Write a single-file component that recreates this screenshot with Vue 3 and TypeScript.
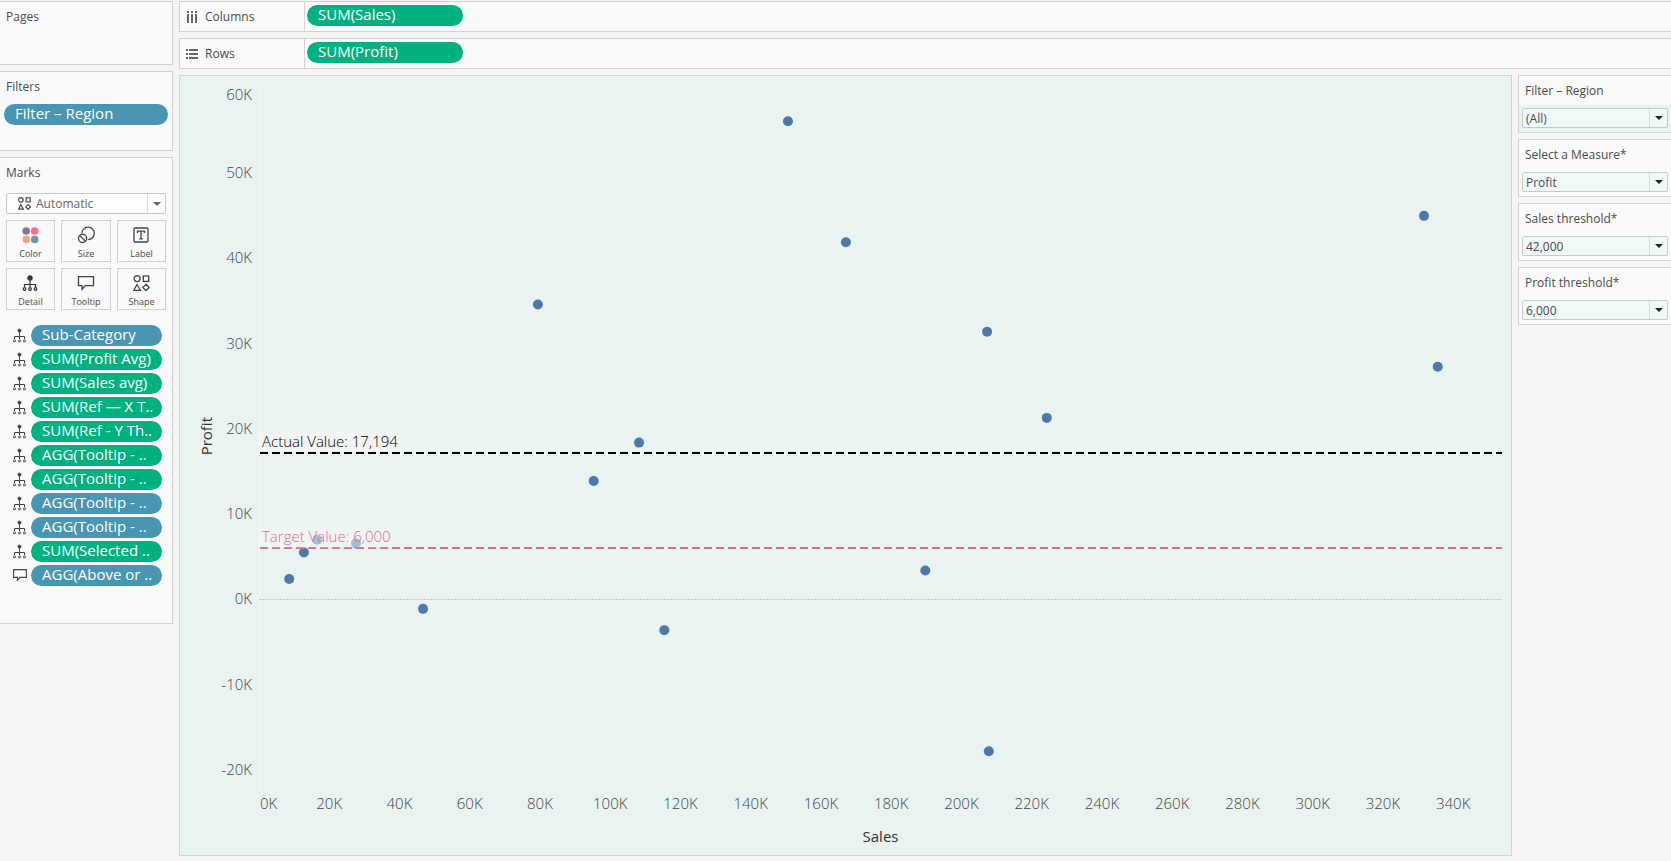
<script setup lang="ts">
interface Point { sales: number; profit: number }
interface Tick { value: number; label: string }
interface Pill { icon: 'detail' | 'tooltip'; text: string; kind: 'measure' | 'dimension' }
interface Control { id: string; label: string; value: string; tinted?: boolean }

const X_MAX = 353.9
const Y_MAX = 60.35
const Y_MIN = -22

const xPct = (v: number): string => `${((v / X_MAX) * 100).toFixed(3)}%`
const yPct = (v: number): string => `${(((Y_MAX - v) / (Y_MAX - Y_MIN)) * 100).toFixed(3)}%`

const xTicks: Tick[] = Array.from({ length: 18 }, (_, i) => ({ value: i * 20, label: `${i * 20}K` }))
const yTicks: Tick[] = [60, 50, 40, 30, 20, 10, 0, -10, -20].map((v) => ({ value: v, label: `${v}K` }))

const points: Point[] = [
  { sales: 150.6, profit: 56.1 },
  { sales: 167.1, profit: 41.9 },
  { sales: 79.4, profit: 34.6 },
  { sales: 331.7, profit: 45.0 },
  { sales: 335.6, profit: 27.3 },
  { sales: 207.3, profit: 31.4 },
  { sales: 224.3, profit: 21.3 },
  { sales: 108.2, profit: 18.4 },
  { sales: 95.3, profit: 13.9 },
  { sales: 189.7, profit: 3.4 },
  { sales: 115.4, profit: -3.6 },
  { sales: 207.8, profit: -17.8 },
  { sales: 46.7, profit: -1.1 },
  { sales: 8.6, profit: 2.4 },
  { sales: 12.8, profit: 5.5 },
  { sales: 16.6, profit: 7.0 },
  { sales: 27.6, profit: 6.6 },
]

const pills: Pill[] = [
  { icon: 'detail', text: 'Sub-Category', kind: 'dimension' },
  { icon: 'detail', text: 'SUM(Profit Avg)', kind: 'measure' },
  { icon: 'detail', text: 'SUM(Sales avg)', kind: 'measure' },
  { icon: 'detail', text: 'SUM(Ref — X T..', kind: 'measure' },
  { icon: 'detail', text: 'SUM(Ref - Y Th..', kind: 'measure' },
  { icon: 'detail', text: 'AGG(Tooltip - ..', kind: 'measure' },
  { icon: 'detail', text: 'AGG(Tooltip - ..', kind: 'measure' },
  { icon: 'detail', text: 'AGG(Tooltip - ..', kind: 'dimension' },
  { icon: 'detail', text: 'AGG(Tooltip - ..', kind: 'dimension' },
  { icon: 'detail', text: 'SUM(Selected ..', kind: 'measure' },
  { icon: 'tooltip', text: 'AGG(Above or ..', kind: 'dimension' },
]

const controls: Control[] = [
  { id: 'region', label: 'Filter – Region', value: '(All)', tinted: true },
  { id: 'measure', label: 'Select a Measure*', value: 'Profit' },
  { id: 'sales-threshold', label: 'Sales threshold*', value: '42,000' },
  { id: 'profit-threshold', label: 'Profit threshold*', value: '6,000' },
]
</script>

<template>
  <div class="workbook">
    <aside class="side">
      <section class="card pages"><h2>Pages</h2></section>
      <section class="card filters">
        <h2>Filters</h2>
        <button type="button" class="pill dimension">Filter – Region</button>
      </section>
      <section class="card marks">
        <h2>Marks</h2>
        <div class="mark-type">
          <svg class="type-icon" width="13" height="13" viewBox="0 0 16 16" fill="none" stroke="#444" stroke-width="1.4">
            <circle cx="3.5" cy="3.5" r="2.8" /><rect x="10" y="1" width="5" height="5" />
            <path d="M3.5 9.5L6.5 15H.7zM12.5 9.3l2.9 2.9-2.9 2.9-2.9-2.9z" />
          </svg>
          <select aria-label="Mark type"><option>Automatic</option></select>
          <span class="arrow"></span>
        </div>
        <div class="mark-grid">
          <button type="button">
            <svg width="18" height="18" viewBox="0 0 18 18">
              <circle cx="4.2" cy="5" r="3.8" fill="#8a7199" /><circle cx="12.7" cy="5" r="3.8" fill="#fb6f80" />
              <circle cx="4.2" cy="13.4" r="3.8" fill="#f5a77e" /><circle cx="12.7" cy="13.4" r="3.8" fill="#6d98a8" />
            </svg>
            <span>Color</span>
          </button>
          <button type="button">
            <svg width="18" height="18" viewBox="0 0 18 18" fill="none" stroke="#444" stroke-width="1.3">
              <path d="M4.9 7.5A6.2 6.2 0 1 1 11.2 13.6" /><circle cx="5.6" cy="12.4" r="4.1" /><path d="M2.8 9.6l5.6 5.6" />
            </svg>
            <span>Size</span>
          </button>
          <button type="button">
            <svg width="18" height="18" viewBox="0 0 18 18" fill="none" stroke="#444" stroke-width="1.3">
              <rect x="1" y="2" width="14" height="14" rx="1" /><path d="M4.5 7V5.2h7V7M8 5.2v7.6M6.2 12.8h3.6" />
            </svg>
            <span>Label</span>
          </button>
          <button type="button">
            <svg width="18" height="18" viewBox="0 0 18 18" fill="none" stroke="#333" stroke-width="1.2">
              <circle cx="8" cy="4" r="2.1" fill="#333" /><path d="M8 6v7M2.5 13V10.5h11V13" />
              <circle cx="2.5" cy="15" r="1.3" /><circle cx="8" cy="15" r="1.3" /><circle cx="13.5" cy="15" r="1.3" />
            </svg>
            <span>Detail</span>
          </button>
          <button type="button">
            <svg width="18" height="18" viewBox="0 0 18 18" fill="none" stroke="#444" stroke-width="1.3">
              <path d="M1.5 2.7h15v9H8.2L5 15.3v-3.6H1.5z" />
            </svg>
            <span>Tooltip</span>
          </button>
          <button type="button">
            <svg width="18" height="18" viewBox="0 0 18 18" fill="none" stroke="#444" stroke-width="1.3">
              <circle cx="4.1" cy="4.6" r="3" /><rect x="10.3" y="2" width="5.4" height="5.4" />
              <path d="M4.1 10.5l3.3 5.8H.8zM13 10.3l3.1 3.1-3.1 3.1-3.1-3.1z" />
            </svg>
            <span>Shape</span>
          </button>
        </div>
        <ul class="pill-list">
          <li v-for="(p, i) in pills" :key="i">
            <svg v-if="p.icon === 'detail'" width="14" height="15" viewBox="0 0 14 15" fill="none" stroke="#444" stroke-width="1">
              <circle cx="6.5" cy="2.6" r="1.5" fill="#444" /><path d="M6.5 4v7M1.5 11V8.5h10V11" />
              <circle cx="1.5" cy="12.9" r="1" /><circle cx="6.5" cy="12.9" r="1" /><circle cx="11.5" cy="12.9" r="1" />
            </svg>
            <svg v-else width="14" height="15" viewBox="0 0 14 15" fill="none" stroke="#444" stroke-width="1.1">
              <path d="M.6 1.6h12.8v7.8H7L4.4 12.4v-3H.6z" />
            </svg>
            <button type="button" class="pill" :class="p.kind">{{ p.text }}</button>
          </li>
        </ul>
      </section>
    </aside>

    <main class="main">
      <section class="shelf">
        <div class="shelf-name">
          <svg width="12" height="12" viewBox="0 0 12 12" fill="#666">
            <path d="M1 0h2v2H1zM5 0h2v2H5zM9 0h2v2H9zM1 3h2v9H1zM5 3h2v9H5zM9 3h2v9H9z" />
          </svg>
          <h2>Columns</h2>
        </div>
        <button type="button" class="pill measure">SUM(Sales)</button>
      </section>
      <section class="shelf">
        <div class="shelf-name">
          <svg width="12" height="12" viewBox="0 0 12 12" fill="#666">
            <path d="M0 1h2v2H0zM0 5h2v2H0zM0 9h2v2H0zM3 1h9v2H3zM3 5h9v2H3zM3 9h9v2H3z" />
          </svg>
          <h2>Rows</h2>
        </div>
        <button type="button" class="pill measure">SUM(Profit)</button>
      </section>

      <div class="body">
        <section class="view">
          <div class="y-title"><span>Profit</span></div>
          <svg class="plot" role="img" aria-label="Profit by sales scatter plot">
            <g stroke="#f5f5f6" stroke-width="1" shape-rendering="crispEdges">
              <line x1="0" y1="0" x2="0" y2="100%" />
              <line x1="0" y1="100%" x2="100%" y2="100%" />
              <line v-for="t in yTicks" :key="t.label" x1="-5" x2="0" :y1="yPct(t.value)" :y2="yPct(t.value)" />
            </g>
            <svg y="100%" overflow="visible">
              <line v-for="t in xTicks" :key="t.label" :x1="xPct(t.value)" :x2="xPct(t.value)" y1="0" y2="4" stroke="#f5f5f6" shape-rendering="crispEdges" />
            </svg>
            <text v-for="(t, i) in yTicks" :key="t.label" class="tick" text-anchor="end" x="-7" :y="yPct(t.value)" :dy="i === 0 ? 12 : 5">{{ t.label }}</text>
            <text v-for="(t, i) in xTicks" :key="t.label" class="tick" :text-anchor="i === 0 ? 'start' : 'middle'" :x="xPct(t.value)" :dx="i === 0 ? 1 : 0" y="100%" dy="22">{{ t.label }}</text>
            <line x1="0" x2="100%" :y1="yPct(0)" :y2="yPct(0)" stroke="#c3c8c7" stroke-dasharray="2 1" shape-rendering="crispEdges" />
            <circle v-for="(p, i) in points" :key="i" :cx="xPct(p.sales)" :cy="yPct(p.profit)" r="5" fill="#4e79a7" />
            <line x1="1" x2="100%" :y1="yPct(17.194)" :y2="yPct(17.194)" stroke="#000" stroke-width="2" stroke-dasharray="8 4" shape-rendering="crispEdges" />
            <line x1="1" x2="100%" :y1="yPct(6)" :y2="yPct(6)" stroke="#d4708f" stroke-width="2" stroke-dasharray="8 4" shape-rendering="crispEdges" />
            <svg :y="yPct(17.194)" overflow="visible">
              <rect x="1" y="-21" width="140" height="19" fill="#f5f5f5" fill-opacity="0.8" />
              <text class="ref" x="3" y="-6" fill="#000">Actual Value: 17,194</text>
            </svg>
            <svg :y="yPct(6)" overflow="visible">
              <rect x="1" y="-21" width="133" height="20" fill="#f5f5f5" fill-opacity="0.55" />
              <text class="ref" x="3" y="-6" fill="#d4708f">Target Value: 6,000</text>
            </svg>
          </svg>
          <div class="x-title">Sales</div>
        </section>

        <aside class="controls">
          <section v-for="c in controls" :key="c.id" class="control">
            <label :for="c.id">{{ c.label }}</label>
            <div class="select-row" :class="{ tinted: c.tinted }">
              <div class="select-box">
                <select :id="c.id"><option>{{ c.value }}</option></select>
                <span class="arrow"></span>
              </div>
            </div>
          </section>
        </aside>
      </div>
    </main>
  </div>
</template>

<style>
body { margin: 0; background: #f5f5f5; }
</style>

<style scoped>
.workbook {
  display: flex;
  gap: 6px;
  min-height: 100vh;
  box-sizing: border-box;
  padding: 1px 0 5px;
  overflow: hidden;
  background: #f5f5f5;
  color: #4b4b4b;
  font-family: "Open Sans", "Noto Sans", sans-serif;
  font-size: 12px;
}
.workbook * { box-sizing: border-box; }
h2 { margin: 0; font-size: 12px; line-height: 16px; font-weight: 400; color: #4b4b4b; }
button, select { font-family: inherit; cursor: pointer; }
.side { width: 173px; flex: none; display: flex; flex-direction: column; gap: 6px; }
.card { background: #fafafa; border: 1px solid #d2d2d2; border-left: 0; padding: 7px 6px; }
.pages { height: 64px; }
.filters { height: 80px; padding-right: 4px; padding-left: 4px; }
.filters h2 { padding-left: 2px; }
.filters .pill { width: 100%; margin-top: 9px; }
.marks { padding-bottom: 37px; }
.pill {
  display: block;
  height: 21px;
  border: 0;
  border-radius: 11px;
  padding: 0 11px 2px;
  color: #fff;
  font-size: 15px;
  line-height: 19px;
  text-align: left;
  white-space: nowrap;
  overflow: hidden;
}
.measure { background: #00b180; }
.dimension { background: #4996b2; }
.mark-type, .select-box {
  position: relative;
  display: flex;
  align-items: center;
  border: 1px solid #c8c8c8;
  border-radius: 2px;
}
.mark-type { width: 160px; height: 21px; margin-top: 12px; background: #fdfdfd; }
.type-icon { position: absolute; left: 11px; pointer-events: none; }
select {
  appearance: none;
  width: 100%;
  height: 100%;
  border: 0;
  padding: 0 0 0 3px;
  background: transparent;
  color: #4b4b4b;
  font-size: 12px;
}
.mark-type select { padding-left: 29px; color: #666; }
.arrow {
  flex: none;
  display: grid;
  place-items: center;
  width: 18px;
  height: 100%;
  border-left: 1px solid #dcdcdc;
  pointer-events: none;
}
.arrow::before {
  content: "";
  border: 4px solid transparent;
  border-top-color: #666;
  border-bottom: 0;
}
.mark-grid { display: grid; grid-template-columns: 49px 50px 49px; gap: 6px; width: 160px; margin-top: 6px; }
.mark-grid button {
  display: flex;
  flex-direction: column;
  align-items: center;
  gap: 4px;
  height: 42px;
  border: 1px solid #d2d2d2;
  padding: 5px 0 0;
  background: #fafafa;
  color: #4b4b4b;
  font-size: 9px;
  line-height: 12px;
}
.pill-list { list-style: none; margin: 15px 0 0; padding: 0; display: grid; gap: 3px; }
.pill-list li { display: flex; align-items: center; gap: 4px; padding-left: 7px; }
.pill-list svg { flex: none; }
.pill-list .pill { width: 131px; }
.main { flex: 1; min-width: 0; display: flex; flex-direction: column; gap: 6px; }
.shelf { display: flex; align-items: stretch; height: 31px; flex: none; background: #fafafa; border: 1px solid #d2d2d2; border-right: 0; }
.shelf-name { display: flex; align-items: center; gap: 7px; width: 125px; padding-left: 6px; border-right: 1px solid #d2d2d2; }
.shelf .pill { width: 156px; margin: 3px 0 0 2px; }
.body { flex: 1; display: flex; gap: 6px; min-height: 0; }
.view {
  flex: 1;
  min-width: 0;
  display: grid;
  grid-template-columns: 79px 1fr;
  grid-template-rows: 1fr 68px;
  padding: 9px 9px 0 0;
  background: #e9f3f1;
  border: 1px solid #d0d4d3;
}
.y-title { display: grid; align-items: center; padding-left: 16px; font-size: 15px; color: #333; }
.y-title span { writing-mode: vertical-rl; transform: rotate(180deg); line-height: 20px; }
.plot { width: 100%; height: 100%; overflow: visible; }
.tick { font-size: 15px; font-weight: 300; fill: #444; }
.ref { font-size: 15px; font-weight: 300; }
.x-title { grid-column: 2; align-self: end; padding-bottom: 9px; text-align: center; font-size: 15px; line-height: 20px; color: #333; }
.controls { width: 153px; flex: none; display: flex; flex-direction: column; gap: 6px; }
.control { border: 1px solid #d2d2d2; border-right: 0; background: #fafafa; }
.control label { display: block; height: 29px; padding: 7px 6px 0; line-height: 16px; }
.select-row { padding: 3px 3px 4px; }
.tinted { background: #e9f3f1; }
.select-box { height: 20px; background: #f1f8f8; }
.controls .arrow::before { border-top-color: #222; }
</style>
